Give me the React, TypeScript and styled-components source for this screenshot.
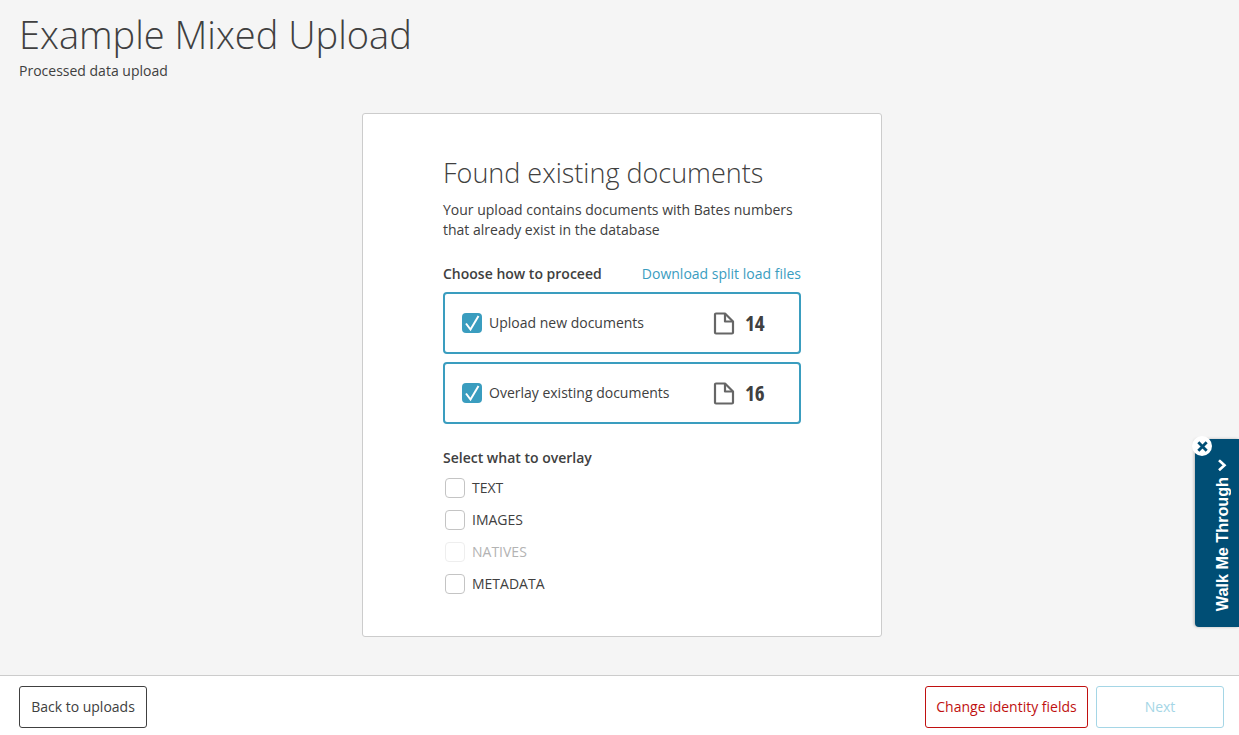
import styled, { createGlobalStyle } from "styled-components"

const GlobalStyle = createGlobalStyle`
  html, body {
    margin: 0;
    padding: 0;
    height: 100%;
    overflow: hidden;
  }
  body {
    font-family: "Open Sans", sans-serif;
    color: #404040;
    background: #f5f5f5;
  }
`

const Page = styled.div`
  width: 100vw;
  height: 100vh;
  display: flex;
  flex-direction: column;
  position: relative;
  background: #f5f5f5;
`
const Header = styled.header`
  padding: 9px 19px 0;
  height: 113px;
  box-sizing: border-box;
  flex: none;
`
const Title = styled.h1`
  margin: 0;
  font-size: 38px;
  line-height: 50px;
  font-weight: 300;
  color: #404040;
`
const Subtitle = styled.div`
  font-size: 14px;
  line-height: 20px;
  margin-top: 2px;
`
const Content = styled.main`
  flex: 1;
  display: flex;
  justify-content: center;
  align-items: flex-start;
  padding-left: 5px;
`
const Card = styled.section`
  width: 520px;
  height: 524px;
  box-sizing: border-box;
  padding: 41px 80px 0;
  background: #fff;
  border: 1px solid #ccc;
  border-radius: 3px;
`
const CardTitle = styled.h2`
  margin: 0;
  font-size: 27px;
  line-height: 36px;
  font-weight: 300;
`
const Intro = styled.p`
  margin: 9px 0 0;
  font-size: 14px;
  line-height: 20px;
`
const ProceedRow = styled.div`
  margin-top: 24px;
  display: flex;
  justify-content: space-between;
  align-items: flex-start;
  height: 20px;
`
const Label = styled.div`
  font-size: 14px;
  line-height: 20px;
  font-weight: 600;
`
const DownloadLink = styled.a`
  font-size: 14px;
  line-height: 20px;
  color: #3a9dbf;
  cursor: pointer;
`
const Options = styled.div`
  margin-top: 8px;
  display: flex;
  flex-direction: column;
  gap: 8px;
`
const Option = styled.div`
  height: 62px;
  box-sizing: border-box;
  display: flex;
  align-items: center;
  padding-left: 17px;
  border: 2px solid #3a9dbf;
  border-radius: 4px;
  font-size: 14px;
`
const CheckedBox = styled.span`
  width: 20px;
  height: 20px;
  flex: none;
  display: flex;
  align-items: center;
  justify-content: center;
  background: #3a9dbf;
  border-radius: 4px;
`
const OptionText = styled.span`
  margin-left: 7px;
  width: 224px;
  flex: none;
  padding-bottom: 2px;
`
const Count = styled.span`
  margin-left: 10px;
  font-size: 21px;
  font-weight: 700;
  font-stretch: 75%;
  line-height: 24px;
`
const OverlayLabel = styled(Label)`
  margin-top: 24px;
`
const OverlayList = styled.div`
  margin-top: 4px;
  display: flex;
  flex-direction: column;
`
const OverlayItem = styled.label<{ $disabled?: boolean }>`
  height: 32px;
  display: flex;
  align-items: center;
  gap: 7px;
  padding-left: 2px;
  font-size: 14px;
  color: ${(p) => (p.$disabled ? "#b3b3b3" : "#404040")};
`
const OverlayName = styled.span`
  padding-bottom: 2px;
`
const EmptyBox = styled.span<{ $disabled?: boolean }>`
  width: 20px;
  height: 20px;
  box-sizing: border-box;
  background: #fff;
  border: 1px solid ${(p) => (p.$disabled ? "#eeeeee" : "#c4c4c4")};
  border-radius: 4px;
`
const Footer = styled.footer`
  height: 60px;
  box-sizing: border-box;
  flex: none;
  display: flex;
  align-items: center;
  justify-content: space-between;
  padding: 2px 15px 0 19px;
  background: #fff;
  border-top: 1px solid #ccc;
`
const FooterRight = styled.div`
  display: flex;
  gap: 8px;
`
const Button = styled.button<{ $tone: "dark" | "danger" | "off"; $width: number }>`
  width: ${(p) => p.$width}px;
  height: 42px;
  padding: 0;
  background: #fff;
  font-family: inherit;
  font-size: 14px;
  border-radius: 3px;
  border: 1px solid
    ${(p) => (p.$tone === "dark" ? "#404040" : p.$tone === "danger" ? "#c01010" : "#a5d6e6")};
  color: ${(p) => (p.$tone === "dark" ? "#404040" : p.$tone === "danger" ? "#c01010" : "#a5d6e6")};
`
const WalkMe = styled.div`
  position: absolute;
  right: 0;
  top: 439px;
  width: 44px;
  height: 188px;
  box-sizing: border-box;
  background: #004e75;
  border-radius: 4px 0 0 4px;
  box-shadow: -1px 0 3px rgba(0, 0, 0, 0.25);
  display: flex;
  align-items: flex-start;
  justify-content: center;
  padding: 20px 0 0 10px;
`
const WalkMeText = styled.div`
  writing-mode: vertical-rl;
  transform: rotate(180deg);
  display: flex;
  align-items: center;
  gap: 6px;
  color: #fff;
  font-family: "Liberation Sans", Arial, sans-serif;
  font-size: 16.2px;
  font-weight: 700;
  line-height: 20px;
  white-space: nowrap;
`
const WalkMeClose = styled.span`
  position: absolute;
  left: -3px;
  top: -3px;
  width: 20px;
  height: 20px;
  border-radius: 50%;
  background: #fff;
  display: flex;
  align-items: center;
  justify-content: center;
`

const Check = () => (
  <svg width="18" height="18" viewBox="0 0 18 18" fill="none">
    <path d="M3 9.5 L7.5 15.5 L15.5 2" stroke="#fff" strokeWidth="2" />
  </svg>
)

const DocIcon = () => (
  <svg width="22" height="23" viewBox="0 0 22 23" fill="none" stroke="#666" strokeWidth="2.2" strokeLinejoin="round">
    <path d="M2 2.5 a1 1 0 0 1 1 -1 H12 L20 9.5 V20.5 a1 1 0 0 1 -1 1 H3 a1 1 0 0 1 -1 -1 Z" />
    <path d="M12 1.5 V9.5 H20" />
  </svg>
)

const options = [
  { text: "Upload new documents", count: 14 },
  { text: "Overlay existing documents", count: 16 },
]

const overlayTypes = [
  { text: "TEXT" },
  { text: "IMAGES" },
  { text: "NATIVES", disabled: true },
  { text: "METADATA" },
]

const App = () => {
  return (
    <Page>
      <GlobalStyle />
      <Header>
        <Title>Example Mixed Upload</Title>
        <Subtitle>Processed data upload</Subtitle>
      </Header>
      <Content>
        <Card>
          <CardTitle>Found existing documents</CardTitle>
          <Intro>
            Your upload contains documents with Bates numbers
            <br />
            that already exist in the database
          </Intro>
          <ProceedRow>
            <Label>Choose how to proceed</Label>
            <DownloadLink>Download split load files</DownloadLink>
          </ProceedRow>
          <Options>
            {options.map((o) => (
              <Option key={o.text}>
                <CheckedBox>
                  <Check />
                </CheckedBox>
                <OptionText>{o.text}</OptionText>
                <DocIcon />
                <Count>{o.count}</Count>
              </Option>
            ))}
          </Options>
          <OverlayLabel>Select what to overlay</OverlayLabel>
          <OverlayList>
            {overlayTypes.map((t) => (
              <OverlayItem key={t.text} $disabled={t.disabled}>
                <EmptyBox $disabled={t.disabled} />
                <OverlayName>{t.text}</OverlayName>
              </OverlayItem>
            ))}
          </OverlayList>
        </Card>
      </Content>
      <Footer>
        <Button $tone="dark" $width={128}>Back to uploads</Button>
        <FooterRight>
          <Button $tone="danger" $width={163}>Change identity fields</Button>
          <Button $tone="off" $width={128}>Next</Button>
        </FooterRight>
      </Footer>
      <WalkMe>
        <WalkMeClose>
          <svg width="11" height="11" viewBox="0 0 10 10">
            <path d="M1.2 1.2 L8.8 8.8 M8.8 1.2 L1.2 8.8" stroke="#004e75" strokeWidth="2.6" />
          </svg>
        </WalkMeClose>
        <WalkMeText>
          Walk Me Through
          <svg width="10" height="12" viewBox="0 0 10 12" fill="none">
            <path d="M8 1 L2.5 6 L8 11" stroke="#fff" strokeWidth="2.6" />
          </svg>
        </WalkMeText>
      </WalkMe>
    </Page>
  )
}

export default App
